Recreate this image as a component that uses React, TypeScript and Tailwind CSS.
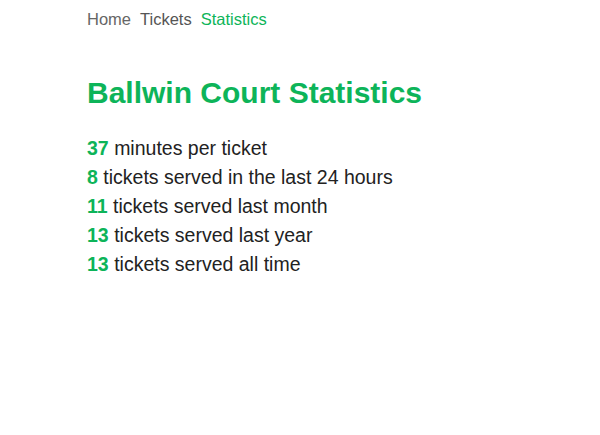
export default function App() {
  const stats: [string, string][] = [
    ["37", "minutes per ticket"],
    ["8", "tickets served in the last 24 hours"],
    ["11", "tickets served last month"],
    ["13", "tickets served last year"],
    ["13", "tickets served all time"],
  ];
  return (
    <div className="min-h-[435px] bg-white pl-[87px] pt-[9px]" style={{ fontFamily: '"Liberation Sans", Arial, sans-serif' }}>
      <nav className="flex gap-[9px] text-[16.5px] leading-[20px]">
        <span className="text-[#666666]">Home</span>
        <span className="text-[#555555]">Tickets</span>
        <span className="text-[#0db459]">Statistics</span>
      </nav>
      <h1 className="mt-[46px] text-[30px] leading-[36px] font-bold text-[#0db459]">Ballwin Court Statistics</h1>
      <div className="mt-[23px] flex flex-col text-[19.5px] leading-[29px] text-[#222222]">
        {stats.map(([n, t], i) => (
          <div key={i}>
            <span className="font-bold text-[#0db459]">{n}</span> {t}
          </div>
        ))}
      </div>
    </div>
  );
}
